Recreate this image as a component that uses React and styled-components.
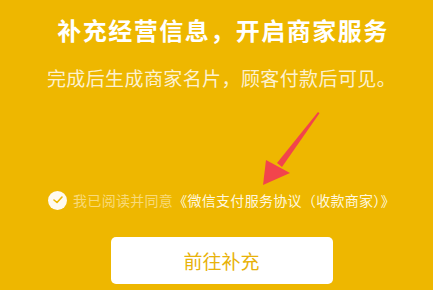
import React, { useState } from 'react'
import styled, { createGlobalStyle } from 'styled-components'

const GlobalStyle = createGlobalStyle`
  html, body {
    margin: 0;
    padding: 0;
    background: #eeb700;
  }
  body {
    font-family: "Noto Sans CJK SC", "Noto Sans", sans-serif;
  }
`

const Page = styled.div`
  position: relative;
  width: 433px;
  height: 290px;
  box-sizing: border-box;
  padding: 15px 0 0 10px;
  display: flex;
  flex-direction: column;
  align-items: center;
  background: #eeb700;
  overflow: hidden;
`

const Title = styled.h1`
  margin: 0 0 0 3px;
  font-size: 24px;
  line-height: 30px;
  font-weight: 700;
  letter-spacing: 1.5px;
  color: #ffffff;
`

const Subtitle = styled.p`
  margin: 20px 0 0;
  font-size: 19px;
  line-height: 26px;
  letter-spacing: 0.4px;
  color: #fdf1cf;
`

const Agreement = styled.label`
  margin-top: 99px;
  height: 20px;
  display: flex;
  align-items: center;
  gap: 6px;
  font-size: 14px;
  letter-spacing: 0.3px;
  cursor: pointer;
`

const Check = styled.span`
  width: 19px;
  height: 19px;
  box-sizing: border-box;
  border-radius: 50%;
  background: ${p => (p.checked ? '#fffaf0' : 'transparent')};
  border: ${p => (p.checked ? 'none' : '1px solid #fff')};
  display: flex;
  align-items: center;
  justify-content: center;
`

const Muted = styled.span`
  color: #f8da7a;
`

const Link = styled.span`
  color: #fff7df;
`

const Button = styled.button`
  margin-top: 27px;
  width: 222px;
  height: 47px;
  border: none;
  border-radius: 5px;
  background: #ffffff;
  color: #e8b20a;
  font-family: inherit;
  font-size: 19px;
  cursor: pointer;
`

const Arrow = styled.svg`
  position: absolute;
  left: 255px;
  top: 105px;
  width: 70px;
  height: 90px;
  pointer-events: none;
`

export default function App() {
  const [checked, setChecked] = useState(true)

  return (
    <Page>
      <GlobalStyle />
      <Title>补充经营信息，开启商家服务</Title>
      <Subtitle>完成后生成商家名片，顾客付款后可见。</Subtitle>
      <Agreement onClick={() => setChecked(!checked)}>
        <Check checked={checked}>
          {checked && (
            <svg width="10" height="8" viewBox="0 0 10 8">
              <path d="M1 4 L4 6.5 L9 1" fill="none" stroke="#eeb700" strokeWidth="1.6" strokeLinecap="round" strokeLinejoin="round" />
            </svg>
          )}
        </Check>
        <span>
          <Muted>我已阅读并同意</Muted>
          <Link>《微信支付服务协议（收款商家）》</Link>
        </span>
      </Agreement>
      <Button>前往补充</Button>
      <Arrow viewBox="0 0 70 90">
        <path d="M63 7 L64.5 8.2 L27 62 L22 58 Z" fill="#f2444c" />
        <path d="M8 80 L11 55 L35 68 Z" fill="#f2444c" />
      </Arrow>
    </Page>
  )
}
